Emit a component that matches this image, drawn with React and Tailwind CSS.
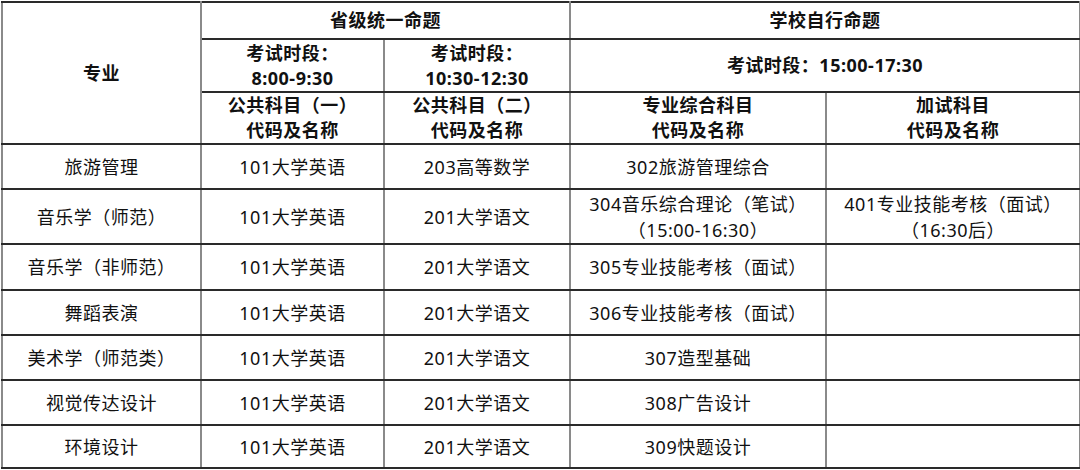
const rows = [
  ["旅游管理", "101大学英语", "203高等数学", "302旅游管理综合", ""],
  ["音乐学（师范）", "101大学英语", "201大学语文", "304音乐综合理论（笔试）\n（15:00-16:30）", "401专业技能考核（面试）\n（16:30后）"],
  ["音乐学（非师范）", "101大学英语", "201大学语文", "305专业技能考核（面试）", ""],
  ["舞蹈表演", "101大学英语", "201大学语文", "306专业技能考核（面试）", ""],
  ["美术学（师范类）", "101大学英语", "201大学语文", "307造型基础", ""],
  ["视觉传达设计", "101大学英语", "201大学语文", "308广告设计", ""],
  ["环境设计", "101大学英语", "201大学语文", "309快题设计", ""],
];
const heights = [45, 55, 46, 45, 45, 45, 43];

const cell = "border-x-2 border-x-[#8a8a8a] border-y-2 border-y-[#2a2a2a] text-center align-middle p-0";

export default function App() {
  return (
    <div className="w-[1080px] h-[470px] bg-white overflow-hidden pl-px pt-px">
      <table
        className="w-[1078px] table-fixed border-collapse text-[18px] tracking-[0.5px] text-[#111]"
        style={{ fontFamily: '"Noto Sans", "Noto Sans CJK SC", sans-serif' }}
      >
        <colgroup>
          <col className="w-[199px]" />
          <col className="w-[183px]" />
          <col className="w-[186px]" />
          <col className="w-[256px]" />
          <col className="w-[254px]" />
        </colgroup>
        <thead className="font-bold leading-[25px]">
          <tr className="h-[37px]">
            <th rowSpan={3} className={cell}>专业</th>
            <th colSpan={2} className={cell}>省级统一命题</th>
            <th colSpan={2} className={cell}>学校自行命题</th>
          </tr>
          <tr className="h-[53px]">
            <th className={cell}>考试时段：<br />8:00-9:30</th>
            <th className={cell}>考试时段：<br />10:30-12:30</th>
            <th colSpan={2} className={cell}>考试时段：15:00-17:30</th>
          </tr>
          <tr className="h-[52px]">
            <th className={cell}>公共科目（一）<br />代码及名称</th>
            <th className={cell}>公共科目（二）<br />代码及名称</th>
            <th className={cell}>专业综合科目<br />代码及名称</th>
            <th className={cell}>加试科目<br />代码及名称</th>
          </tr>
        </thead>
        <tbody className="leading-[26px]">
          {rows.map((r, i) => (
            <tr key={i} style={{ height: heights[i] }}>
              {r.map((c, j) => (
                <td key={j} className={cell + " whitespace-pre-line"}>{c}</td>
              ))}
            </tr>
          ))}
        </tbody>
      </table>
    </div>
  );
}
